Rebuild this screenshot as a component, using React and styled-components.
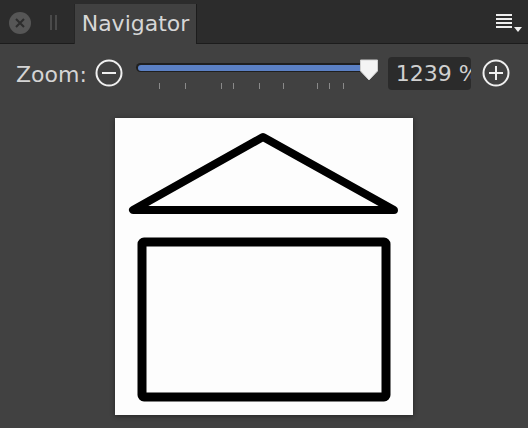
import React from 'react';
import styled, { createGlobalStyle } from 'styled-components';

const GlobalStyle = createGlobalStyle`
    html, body {
        margin: 0;
        padding: 0;
        background: #414141;
    }
    body {
        font-family: "DejaVu Sans", "Open Sans", sans-serif;
        overflow: hidden;
    }
`;

const Panel = styled.div`
    width: 528px;
    height: 428px;
    background: #414141;
    display: flex;
    flex-direction: column;
`;

const Header = styled.div`
    height: 43px;
    background: #2c2c2c;
    border-bottom: 1px solid #1c1c1c;
    display: flex;
    align-items: flex-end;
    padding-left: 9px;
    padding-right: 6px;
`;

const CloseButton = styled.div`
    width: 22px;
    height: 22px;
    border-radius: 50%;
    background: #565656;
    align-self: center;
    margin-top: 2px;
    display: flex;
    align-items: center;
    justify-content: center;
`;

const Grip = styled.div`
    align-self: center;
    margin-left: 19px;
    margin-top: 2px;
    width: 7px;
    height: 15px;
    border-left: 2px solid #4a4a4a;
    border-right: 2px solid #4a4a4a;
    box-sizing: border-box;
`;

const Tab = styled.div`
    margin-left: 17px;
    width: 123px;
    height: 40px;
    margin-bottom: -1px;
    background: #414141;
    border-left: 1px solid #262626;
    border-right: 1px solid #1c1c1c;
    box-sizing: border-box;
    display: flex;
    align-items: center;
    justify-content: center;
    color: #d6d6d6;
    font-size: 22px;
    padding-bottom: 2px;
`;

const MenuButton = styled.div`
    margin-left: auto;
    align-self: flex-start;
    margin-top: 14px;
    display: flex;
    align-items: flex-end;
    gap: 2px;
`;

const MenuLines = styled.div`
    width: 16px;
    display: flex;
    flex-direction: column;
    gap: 2px;
`;

const MenuLine = styled.span`
    display: block;
    height: 2px;
    background: #eeeeee;
`;

const Caret = styled.span`
    width: 0;
    height: 0;
    border-left: 4px solid transparent;
    border-right: 4px solid transparent;
    border-top: 5px solid #eeeeee;
    margin-bottom: -4px;
`;

const Toolbar = styled.div`
    height: 58px;
    display: flex;
    align-items: center;
    padding-left: 16px;
`;

const Label = styled.span`
    color: #d4d4d4;
    font-size: 22px;
    margin-top: 2px;
`;

const RoundIcon = styled.svg`
    display: block;
    margin-left: ${p => p.$gap}px;
    flex: none;
`;

const Slider = styled.div`
    position: relative;
    width: 243px;
    height: 34px;
    margin-left: 13px;
    flex: none;
`;

const Track = styled.div`
    position: absolute;
    left: 0;
    top: 7px;
    width: 236px;
    height: 9px;
    box-sizing: border-box;
    border-radius: 5px;
    background: #1f1f1f;
    padding: 2px 1px 1px 2px;
`;

const Fill = styled.div`
    height: 100%;
    border-radius: 3px;
    background: #5b80c4;
`;

const Thumb = styled.svg`
    position: absolute;
    left: 223px;
    top: 3px;
`;

const Tick = styled.span`
    position: absolute;
    top: 27px;
    width: 1px;
    height: 6px;
    background: #8a8a8a;
`;

const NumberField = styled.div`
    margin-left: 9px;
    width: 83px;
    height: 33px;
    border-radius: 4px;
    background: #2b2b2b;
    box-sizing: border-box;
    padding-left: 8px;
    overflow: hidden;
    white-space: nowrap;
    color: #d0d0d0;
    font-size: 22px;
    line-height: 33px;
    flex: none;
`;

const Viewport = styled.div`
    flex: 1;
    display: flex;
    justify-content: center;
    padding-top: 16px;
`;

const Preview = styled.div`
    width: 298px;
    height: 297px;
    background: #fdfdfd;
    box-shadow: 0 1px 5px rgba(0, 0, 0, 0.45);
`;

const ticks = [23, 49, 85, 97, 123, 147, 181, 193, 207];

const CircleIcon = ({ plus, gap }) => (
    <RoundIcon $gap={gap} width="28" height="28" viewBox="0 0 28 28">
        <circle cx="14" cy="14" r="12.5" fill="none" stroke="#f0f0f0" strokeWidth="2" />
        <line x1="7" y1="14" x2="21" y2="14" stroke="#f0f0f0" strokeWidth="2" />
        {plus && <line x1="14" y1="7" x2="14" y2="21" stroke="#f0f0f0" strokeWidth="2" />}
    </RoundIcon>
);

const App = () => {
    return (
        <Panel>
            <GlobalStyle />
            <Header>
                <CloseButton>
                    <svg width="10" height="10" viewBox="0 0 10 10">
                        <path d="M1 1 L9 9 M9 1 L1 9" stroke="#2c2c2c" strokeWidth="2" />
                    </svg>
                </CloseButton>
                <Grip />
                <Tab>Navigator</Tab>
                <MenuButton>
                    <MenuLines>
                        <MenuLine />
                        <MenuLine />
                        <MenuLine />
                        <MenuLine />
                    </MenuLines>
                    <Caret />
                </MenuButton>
            </Header>
            <Toolbar>
                <Label>Zoom:</Label>
                <CircleIcon gap={8} />
                <Slider>
                    <Track>
                        <Fill />
                    </Track>
                    {ticks.map(x => (
                        <Tick key={x} style={{ left: x }} />
                    ))}
                    <Thumb width="20" height="22" viewBox="0 0 20 22">
                        <path d="M1.5 1 H18.5 V12 L10 21 L1.5 12 Z" fill="#f4f4f4" stroke="#cfcfcf" strokeWidth="1" />
                    </Thumb>
                </Slider>
                <NumberField>1239 %</NumberField>
                <CircleIcon plus gap={11} />
            </Toolbar>
            <Viewport>
                <Preview>
                    <svg width="298" height="297" viewBox="0 0 298 297">
                        <path
                            d="M148 19 L18 92 L279 92 Z"
                            fill="none"
                            stroke="#000"
                            strokeWidth="8"
                            strokeLinejoin="round"
                        />
                        <rect x="27" y="124" width="244" height="155" fill="none" stroke="#000" strokeWidth="9" rx="2" />
                    </svg>
                </Preview>
            </Viewport>
        </Panel>
    );
};

export default App;
